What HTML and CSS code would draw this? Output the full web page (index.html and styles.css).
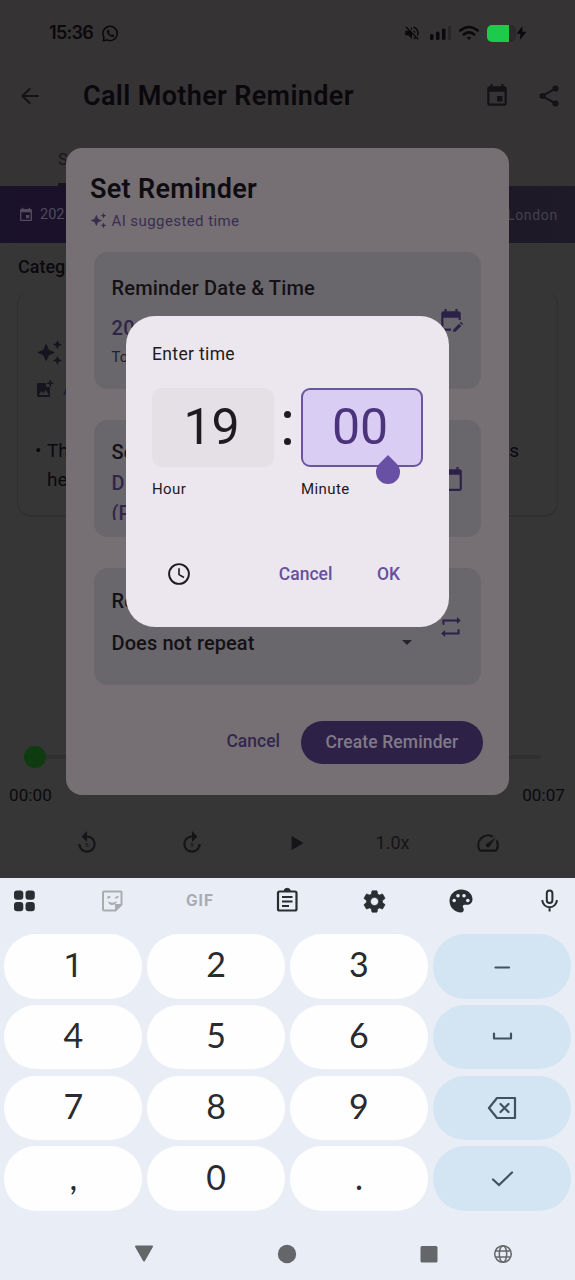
FILE: index.html
```html
<!DOCTYPE html>
<html lang="en">
<head>
<meta charset="utf-8">
<title>Call Mother Reminder</title>
<link rel="stylesheet" href="styles.css">
</head>
<body>
<svg class="defs" aria-hidden="true">
  <symbol id="event" viewBox="0 0 24 24"><path d="M17 12h-5v5h5v-5zM16 1v2H8V1H6v2H5c-1.11 0-1.99.9-1.99 2L3 19c0 1.1.89 2 2 2h14c1.1 0 2-.9 2-2V5c0-1.1-.9-2-2-2h-1V1h-2zm3 18H5V8h14v11z"/></symbol>
  <symbol id="calendar" viewBox="0 0 24 24"><path d="M20 3h-1V1h-2v2H7V1H5v2H4c-1.1 0-2 .9-2 2v16c0 1.100.9 2 2 2h16c1.100 0 2-.9 2-2V5c0-1.100-.9-2-2-2zm0 18H4V8h16v13z"/></symbol>
  <symbol id="sparkle" viewBox="0 0 24 24"><path d="M19 9l1.250-2.750L23 5l-2.750-1.250L19 1l-1.250 2.750L15 5l2.750 1.250L19 9zm-7.500.5L9 4 6.500 9.500 1 12l5.500 2.500L9 20l2.500-5.500L17 12l-5.500-2.500zM19 15l-1.250 2.750L15 19l2.750 1.250L19 23l1.250-2.750L23 19l-2.750-1.250L19 15z"/></symbol>
  <symbol id="replay" viewBox="0 0 24 24"><path d="M12 5V1L7 6l5 5V7c3.310 0 6 2.690 6 6s-2.690 6-6 6-6-2.690-6-6H4c0 4.420 3.580 8 8 8s8-3.580 8-8-3.580-8-8-8z"/></symbol>
</svg>
<div class="phone">
  <main class="app">
    <div class="status">
      <span class="clock">15:36</span>
      <svg class="whatsapp" viewBox="0 0 18 18"><path d="M1.300 16.700 2 12.800A7.600 7.600 0 1 1 5.300 15.800Z" fill="none" stroke="currentColor" stroke-width="1.600" stroke-linejoin="round"/><path d="M5.500 5.200 6.800 4.700 8.100 7.200 7.400 8.200Q8.100 9.700 9.800 10.500L10.800 9.700 13.100 11 12.500 12.400Q10.800 13.500 8 11.500 4.400 8.500 5.500 5.200Z"/></svg>
      <div class="signals">
        <svg width="18" height="18" viewBox="0 0 24 24"><path d="M16.500 12c0-1.770-1.020-3.290-2.500-4.030v2.210l2.450 2.450c.03-.2.05-.41.05-.63zm2.500 0c0 .94-.2 1.820-.54 2.640l1.510 1.510C20.630 14.910 21 13.500 21 12c0-4.280-2.990-7.860-7-8.770v2.060c2.890.86 5 3.540 5 6.710zM4.270 3L3 4.270 7.730 9H3v6h4l5 5v-6.730l4.250 4.250c-.67.52-1.420.93-2.250 1.180v2.060c1.380-.31 2.630-.95 3.690-1.810L19.730 21 21 19.730l-9-9L4.270 3zM12 4L9.920 6.090 12 8.180V4z"/></svg>
        <svg class="bars" width="22" height="16" viewBox="0 0 22 16"><rect x="0" y="9" width="3.500" height="6" rx="1.500"/><rect x="6" y="6.500" width="3.500" height="8.500" rx="1.500"/><rect x="12" y="3.500" width="3.500" height="11.500" rx="1.500"/><rect x="18" y="1" width="3" height="14" rx="1" opacity=".3"/></svg>
        <svg class="wifi" width="20" height="16" viewBox="0 0 20 16"><path d="M1.300 5.500Q10-1.500 18.700 5.500M4.800 9.500Q10 5.200 15.200 9.500" fill="none" stroke="currentColor" stroke-width="2.600" stroke-linecap="round"/><path d="M7.800 12.300Q10 11 12.200 12.300L10 15.200Z"/></svg>
        <span class="battery"><i></i></span>
        <svg width="11" height="14" viewBox="0 0 11 14"><path d="M6.500 0 .5 7.800H4.500L3.800 14 10.500 5.700H6.300Z"/></svg>
      </div>
    </div>
    <header class="appbar">
      <svg width="18" height="18" viewBox="0 0 18 18"><path d="M17.500 9H1.800M9.300 1.200 1.500 9 9.300 16.800" fill="none" stroke="currentColor" stroke-width="2"/></svg>
      <h1>Call Mother Reminder</h1>
      <svg class="bar-event" width="26" height="26"><use href="#event"/></svg>
      <svg width="26" height="26" viewBox="0 0 24 24"><path d="M18 5 6 12l12 7" fill="none" stroke="currentColor" stroke-width="1.800"/><circle cx="18" cy="5" r="2.800"/><circle cx="6" cy="12" r="2.800"/><circle cx="18" cy="19" r="2.800"/></svg>
    </header>
    <div class="tabs"><span class="tab">S</span></div>
    <div class="strip"><svg width="16" height="16"><use href="#event"/></svg><span>202</span><span class="city">London</span></div>
    <section class="body">
      <div class="category">Categ</div>
      <div class="summary">
        <svg class="spark" width="27" height="27"><use href="#sparkle"/></svg>
        <div class="photo-row"><svg width="18" height="18" viewBox="0 0 18 18"><path fill-rule="evenodd" d="M2 3h8v4h4v9a1 1 0 0 1-1 1H2a1 1 0 0 1-1-1V4a1 1 0 0 1 1-1Zm1 12h10l-3.200-5-2.500 3.300L5.500 11Z"/><path d="M13.500 0h1.600v2.400h2.400V4h-2.400v2.400h-1.600V4h-2.400V2.400h2.400Z"/></svg><span>A</span></div>
        <div class="bullet"><span class="dot">•</span><p>Th<br>he</p><span class="tail">s</span></div>
      </div>
      <div class="track"><i></i></div>
      <div class="times"><span>00:00</span><span>00:07</span></div>
      <div class="controls">
        <span class="skip"><svg width="26" height="26"><use href="#replay"/></svg><b>5</b></span>
        <span class="skip"><svg class="flip" width="26" height="26"><use href="#replay"/></svg><b>5</b></span>
        <svg width="26" height="26" viewBox="0 0 24 24"><path d="M7 5.500v13l11-6.500z"/></svg>
        <span class="rate">1.0x</span>
        <svg width="26" height="26" viewBox="0 0 24 24"><path d="M20.380 8.570l-1.230 1.850a8 8 0 0 1-.22 7.580H5.070A8 8 0 0 1 15.580 6.850l1.850-1.230A10 10 0 0 0 3.350 19a2 2 0 0 0 1.720 1h13.850a2 2 0 0 0 1.740-1 10 10 0 0 0-.27-10.440zm-9.790 6.840a2 2 0 0 0 2.830 0l5.660-8.490-8.490 5.660a2 2 0 0 0 0 2.830z"/></svg>
      </div>
    </section>
  </main>

  <section class="reminder">
    <h2>Set Reminder</h2>
    <div class="suggest"><svg width="17" height="17"><use href="#sparkle"/></svg><span>AI suggested time</span></div>
    <div class="card card-date">
      <div class="copy"><h3>Reminder Date &amp; Time</h3><div class="value">20</div><div class="note">To</div></div>
      <svg width="26" height="26" viewBox="0 0 24 24"><path d="M5 21H12v-2H5V9h14v2h2V5c0-1.100-.9-2-2-2h-1V1h-2v2H8V1H6v2H5C3.900 3 3 3.900 3 5v14c0 1.100.9 2 2 2Z"/><path d="m14 20 5.500-5.500 2 2L16 22h-2ZM20.200 13.800l1-1 2 2-1 1Z"/></svg>
    </div>
    <div class="card card-calendar">
      <div class="copy"><h3>Se</h3><div class="value two">D<br>(P</div></div>
      <svg width="26" height="26"><use href="#calendar"/></svg>
    </div>
    <div class="card card-repeat">
      <div class="copy"><h3>Re</h3><div class="select"><span>Does not repeat</span><i></i></div></div>
      <svg width="26" height="26" viewBox="0 0 24 24"><path d="M5 10V6h13M19 14v4H6" fill="none" stroke="currentColor" stroke-width="1.900"/><path d="m17.500 2.800 3.500 3.200-3.500 3.200ZM6.500 14.800l-3.500 3.200 3.500 3.200Z"/></svg>
    </div>
    <div class="actions"><span>Cancel</span><button class="create">Create Reminder</button></div>
  </section>

  <section class="picker">
    <div class="picker-title">Enter time</div>
    <div class="fields">
      <div class="field">19</div>
      <div class="colon"><i></i><i></i></div>
      <div class="field active">00<svg class="handle" width="24" height="29" viewBox="0 0 24 29"><path d="M12 0 20.500 8.500A12 12 0 1 1 3.500 8.500Z"/></svg></div>
    </div>
    <div class="labels"><span>Hour</span><span>Minute</span></div>
    <div class="picker-actions">
      <svg width="22" height="22" viewBox="0 0 22 22" fill="none" stroke="currentColor" stroke-width="1.900"><circle cx="11" cy="11" r="9.900"/><path d="M11 5.200V11.600L16 14.500" stroke-width="1.600"/></svg>
      <span class="cancel">Cancel</span><span>OK</span>
    </div>
  </section>

  <section class="keyboard">
    <div class="tools">
      <svg viewBox="0 0 30 30"><rect x="5" y="4.500" width="9.300" height="9.300" rx="3"/><rect x="16.500" y="4.500" width="9.300" height="9.300" rx="3"/><rect x="5" y="16" width="9.300" height="9.300" rx="3"/><rect x="16.500" y="16" width="9.300" height="9.300" rx="3"/></svg>
      <svg class="muted" viewBox="0 0 30 30"><path d="M7 5.500h16.500a1 1 0 0 1 1 1v12l-6 6H7a1 1 0 0 1-1-1v-17a1 1 0 0 1 1-1Z" fill="none" stroke="currentColor" stroke-width="2"/><path d="M24.500 18h-6.500V24.500ZM10 10.700l3-1 .6 2-3 1ZM17.500 11.800l3.500-2.300.8 1.800-3 1.500ZM11 15.500q5 2.500 9-.5-1 4-5 4-3 0-4-3.500Z"/></svg>
      <span class="gif muted">GIF</span>
      <svg viewBox="0 0 30 30" fill="none" stroke="currentColor" stroke-width="2.200"><rect x="5" y="5.500" width="18.500" height="19" rx="1.500"/><path d="M9 11h10.500M9 15.500h10.500M9 20h7" stroke-width="2"/><path d="M11 5.500a3.200 3.200 0 0 1 6.400 0" fill="currentColor" stroke-width="1"/></svg>
      <svg viewBox="0 0 24 24"><path d="M19.140 12.940c.04-.3.06-.61.06-.94 0-.32-.02-.64-.07-.94l2.030-1.580c.18-.14.23-.41.12-.61l-1.920-3.320c-.12-.22-.37-.29-.59-.22l-2.390.96c-.5-.38-1.030-.7-1.620-.94l-.36-2.540c-.04-.24-.24-.41-.48-.41h-3.840c-.24 0-.43.17-.47.41l-.36 2.540c-.59.24-1.130.57-1.620.94l-2.390-.96c-.22-.08-.47 0-.59.22L2.740 8.870c-.12.21-.08.47.12.61l2.030 1.580c-.05.3-.09.63-.09.94s.02.64.07.94l-2.030 1.580c-.18.14-.23.41-.12.61l1.920 3.320c.12.22.37.29.59.22l2.390-.96c.5.38 1.030.7 1.620.94l.36 2.540c.05.24.24.41.48.41h3.840c.24 0 .44-.17.47-.41l.36-2.540c.59-.24 1.130-.56 1.620-.94l2.390.96c.22.08.47 0 .59-.22l1.920-3.320c.12-.22.07-.47-.12-.61l-2.010-1.580zM12 15.600c-1.980 0-3.600-1.620-3.600-3.600s1.620-3.600 3.600-3.600 3.600 1.620 3.600 3.600-1.620 3.600-3.600 3.600z" stroke="currentColor" stroke-width=".5"/></svg>
      <svg viewBox="0 0 30 30"><path d="M15 3.500C8.500 3.500 3.500 8.700 3.500 15S8.700 26.500 15 26.500c1.700 0 2.800-1.200 2.800-2.800 0-1.700-1-2-1-3.200 0-1 .8-1.700 1.800-1.700h2.200c3.400 0 5.700-2.400 5.700-5.600 0-5.500-5.200-9.700-11.500-9.700Z"/><g fill="#e9eef6"><circle cx="8.200" cy="14.500" r="1.800"/><circle cx="12" cy="9.700" r="1.800"/><circle cx="18" cy="9.700" r="1.800"/><circle cx="21.800" cy="14.500" r="1.800"/></g></svg>
      <svg viewBox="0 0 30 30" fill="none" stroke="currentColor" stroke-width="2"><rect x="12.800" y="4.500" width="5.600" height="12.500" rx="2.800"/><path d="M8.300 14a7.300 7.300 0 0 0 14.600 0M15.600 21.300V25.500"/></svg>
    </div>
    <div class="keys">
      <span class="one">1</span><span>2</span><span>3</span>
      <span class="fn"><svg viewBox="0 0 30 30"><path d="M8.500 16.500H22"/></svg></span>
      <span>4</span><span>5</span><span>6</span>
      <span class="fn"><svg viewBox="0 0 30 30"><path d="M7 11.500V16.500H24V11.500" stroke-linejoin="round"/></svg></span>
      <span>7</span><span>8</span><span>9</span>
      <span class="fn"><svg viewBox="0 0 30 30"><path d="M10 5H28V25H10L2 15Z" stroke-linejoin="round"/><path d="M13.500 11l8 8M21.500 11l-8 8"/></svg></span>
      <span>,</span><span>0</span><span>.</span>
      <span class="fn"><svg viewBox="0 0 30 30"><path d="M6 15.500 12 21 25 8.500"/></svg></span>
    </div>
    <nav class="nav">
      <svg viewBox="0 0 20 20"><path d="M2 2.500H18L10 16.500Z" stroke="currentColor" stroke-width="2" stroke-linejoin="round"/></svg>
      <svg viewBox="0 0 20 20"><circle cx="10" cy="10" r="9.200"/></svg>
      <svg viewBox="0 0 20 20"><rect x="1.500" y="2" width="17" height="16.500" rx="1.500"/></svg>
      <svg viewBox="0 0 20 20" fill="none" stroke="currentColor" stroke-width="1.500"><circle cx="10" cy="10" r="8.300"/><ellipse cx="10" cy="10" rx="3.700" ry="8.300"/><path d="M2.500 7h15M2.500 13h15"/></svg>
    </nav>
  </section>
</div>
</body>
</html>
```

FILE: styles.css
```css
* { box-sizing: border-box; }
body { margin: 0; font-family: Roboto, "Liberation Sans", sans-serif; }
h1, h2, h3, p { margin: 0; }
svg { display: block; fill: currentColor; flex: none; overflow: visible; }
svg[fill="none"] { fill: none; }
.defs { position: absolute; width: 0; height: 0; }
.phone { position: relative; width: 575px; height: 1280px; overflow: hidden; background: #363636; color: #0b090d; display: flex; flex-direction: column; }

.app { height: 878px; flex: none; }
.status { height: 66px; padding: 0 48px 0 49px; display: flex; align-items: center; background: #363335; color: #0a090c; }
.clock { font: 600 18px/20px Inter, sans-serif; letter-spacing: -.7px; width: 53px; }
.whatsapp { width: 17px; height: 17px; }
.signals { margin-left: auto; display: flex; align-items: center; }
.bars { margin-left: 9px; }
.wifi { margin-left: 7px; }
.battery { width: 29px; height: 17px; margin: 0 0 0 8px; border-radius: 5px; overflow: hidden; background: #2b292b; }
.battery i { display: block; width: 22px; height: 17px; background: #1ccb4b; }
.appbar { height: 59px; padding: 0 13px 0 21px; display: flex; align-items: center; background: #363335; color: #141216; }
.appbar h1 { font-size: 27px; font-weight: 600; line-height: 32px; letter-spacing: .36px; margin-left: 44px; flex: 1; color: #0a080c; }
.bar-event { margin-right: 26px; }
.tabs { height: 61px; padding: 25px 0 0 58px; background: #363335; font-size: 16px; line-height: 20px; }
.tab { display: flex; height: 36px; width: 80px; border-bottom: 3px solid #19151f; border-radius: 3px 3px 0 0; color: #19151f; }
.strip { height: 57px; padding: 0 17px 0 18px; display: flex; align-items: center; gap: 6px; color: #514b5c; font-size: 14.500px; background: linear-gradient(90deg, #1a112a, #1e1a27); }
.strip .city { margin-left: auto; font-size: 14px; letter-spacing: .7px; color: #45414c; }
.body { height: 635px; }
.category { height: 48px; padding: 0 18px; font-size: 18px; font-weight: 500; line-height: 48px; }
.summary { width: 541px; height: 226px; margin-left: 17px; padding: 48px 18px 0 18px; border-radius: 14px; border: solid #303030; border-width: 0 1px 2px; }
.spark { margin-bottom: 12px; color: #17131f; }
.photo-row { display: flex; gap: 9px; align-items: center; height: 22px; font-size: 17px; color: #1d1732; }
.photo-row svg { color: #17131f; }
.bullet { display: flex; margin-top: 37px; font-size: 19px; line-height: 28.500px; }
.bullet .dot { width: 12px; margin-left: -1px; }
.bullet .tail { margin-left: auto; margin-right: 20px; }
.track { height: 4px; margin: 238px 34px 0 24px; background: #303030; border-radius: 2px; display: flex; align-items: center; }
.track i { width: 22px; height: 22px; border-radius: 50%; background: #0f3b11; }
.times { display: flex; justify-content: space-between; padding: 25px 9px 0; font-size: 17px; line-height: 22px; letter-spacing: .1px; }
.times span:last-child { margin-right: 1px; }
.controls { display: grid; grid-template-columns: 105px 105px 105px 86px 105px; justify-items: center; padding: 24px 0 0 34.500px; height: 60px; color: #151417; }
.skip { display: grid; place-items: center; height: 26px; }
.skip > * { grid-area: 1 / 1; }
.skip b { font-size: 6px; font-weight: 500; padding-top: 3px; }
.flip { transform: scaleX(-1); }
.rate { font-size: 18px; line-height: 25px; }

.reminder { position: absolute; left: 66px; top: 147.500px; width: 443px; height: 647.500px; padding: 25px 26px 31px 24px; border-radius: 16px; background: #767074; color: #100d12; }
.reminder h2 { font-size: 27px; font-weight: 600; line-height: 32px; letter-spacing: .3px; }
.suggest { display: flex; align-items: center; gap: 4.500px; height: 22px; margin: 5px 0 20.500px; color: #392e50; font-size: 15px; letter-spacing: .42px; }
.card { width: 387px; height: 117px; margin: 0 0 31px 4px; padding: 0 17px 0 17.500px; display: flex; align-items: center; border-radius: 14px; background: #69676c; color: #2c2147; }
.card.card-date { height: 137px; }
.copy { flex: 1; align-self: stretch; }
.card h3 { font-size: 20px; font-weight: 500; line-height: 24px; color: #141116; letter-spacing: .18px; }
.card-date .copy { padding-top: 24px; }
.value { font-size: 20px; font-weight: 500; line-height: 30px; color: #302547; }
.card-date .value { margin-top: 13px; letter-spacing: .4px; }
.note { font-size: 15px; line-height: 28px; color: #242027; }
.card-calendar .copy { padding-top: 20px; }
.two { height: 52px; margin-top: 3.500px; overflow: hidden; }
.card-repeat .copy { padding-top: 20.500px; }
.select { display: flex; align-items: center; justify-content: space-between; margin-top: 17px; padding-right: 26px; font-size: 20px; font-weight: 500; line-height: 26px; letter-spacing: .1px; color: #141116; }
.select i { border: 5.500px solid transparent; border-top-color: #28242b; border-bottom: 0; }
.actions { display: flex; align-items: center; justify-content: flex-end; gap: 21px; margin-top: 35.500px; font-size: 17.500px; font-weight: 500; color: #33274d; }
.actions > span { padding-bottom: 2px; }
.create { width: 182px; height: 43px; padding: 0; border: 0; border-radius: 22px; background: #2e2148; color: #817a89; font: 500 17.500px/42px Roboto, sans-serif; letter-spacing: .12px; }

.picker { position: absolute; left: 126px; top: 316px; width: 323px; height: 311px; padding: 27px 26px; border-radius: 29px; background: #ece6ee; color: #1d1a21; }
.picker-title { font-size: 17.500px; line-height: 22px; letter-spacing: .35px; }
.fields { display: flex; margin-top: 23px; }
.field { width: 122px; height: 79px; border-radius: 9px; background: #e5e0e6; text-align: center; font-size: 50px; line-height: 79px; padding-right: 3px; }
.colon { width: 27px; display: flex; flex-direction: column; align-items: center; justify-content: center; gap: 20px; }
.colon i { width: 7px; height: 7px; border-radius: 50%; background: #1d1a21; }
.active { position: relative; border: 2px solid #6b559c; background: #dacdf4; color: #4b347b; line-height: 75px; padding-right: 4px; }
.handle { position: absolute; left: 73px; top: 65px; color: #6850a4; }
.labels { display: grid; grid-template-columns: 149px 1fr; margin-top: 12px; font-size: 15px; line-height: 20px; letter-spacing: .42px; }
.picker-actions { display: flex; align-items: center; margin: 63px 23px 0 15.500px; height: 24px; font-size: 17.500px; font-weight: 500; color: #6650a0; }
.picker-actions svg { color: #1d1a21; }
.cancel { margin-left: auto; margin-right: 44.500px; }

.keyboard { height: 402px; background: #e9eef6; color: #292e33; }
.tools { height: 56px; padding: 0 11px 9.500px 9px; display: flex; align-items: center; justify-content: space-between; }
.tools svg { width: 30px; height: 30px; }
.tools svg:nth-child(5) { width: 27px; height: 27px; }
.muted { color: #a9abb0; }
.gif { width: 30px; display: flex; justify-content: center; font: 700 15.500px/28px Inter, sans-serif; letter-spacing: 1px; }
.keys { display: grid; grid-template-columns: repeat(4, 138px); grid-auto-rows: 64.500px; gap: 6.300px 4.800px; padding-left: 4.300px; }
.keys > span { display: flex; align-items: center; justify-content: center; border-radius: 32px; background: #fefefe; color: #292b2e; font: 400 34px/60px Lato, sans-serif; padding-bottom: 4px; }
.keys .one { font-family: Roboto, sans-serif; padding-bottom: 3px; }
.keys .fn { background: #d3e5f2; color: #42515f; padding: 0; }
.fn svg { width: 30px; height: 30px; fill: none; stroke: currentColor; stroke-width: 2.200; stroke-linecap: round; }
.nav { height: 86px; padding-left: 134px; display: flex; align-items: center; color: #646669; }
.nav svg { width: 20px; height: 20px; margin-right: 122.500px; }
.nav svg:nth-child(3) { margin-right: 54px; }
.nav svg:last-child { margin: 0; }
```
